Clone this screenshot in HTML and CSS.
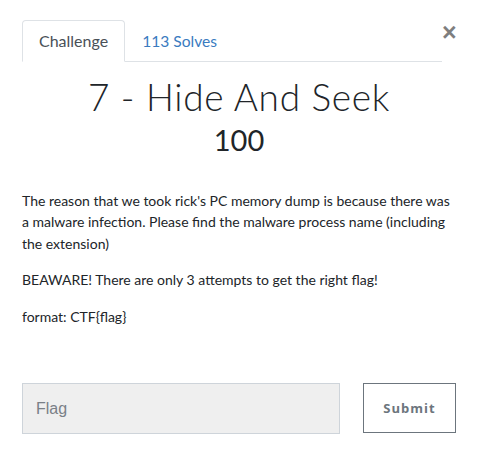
FILE: index.html
```html
<!DOCTYPE html>
<html>
<head>
<meta charset="utf-8">
<link rel="stylesheet" href="styles.css">
</head>
<body>
<div class="modal">
  <div class="header">
    <ul class="tabs">
      <li class="tab active">Challenge</li>
      <li class="tab link">113 Solves</li>
    </ul>
    <button class="close">×</button>
  </div>
  <div class="body">
    <h2 class="title">7 - Hide And Seek</h2>
    <h3 class="value">100</h3>
    <div class="desc">
      <p>The reason that we took rick's PC memory dump is because there was a malware infection. Please find the malware process name (including the extension)</p>
      <p>BEAWARE! There are only 3 attempts to get the right flag!</p>
      <p>format: CTF{flag}</p>
    </div>
    <form class="submit-row">
      <input class="flag" type="text" placeholder="Flag">
      <button class="submit" type="button">Submit</button>
    </form>
  </div>
</div>
</body>
</html>
```
FILE: styles.css
```css
html, body {
  margin: 0;
  padding: 0;
  background: #fff;
}
body {
  font-family: Lato, "Noto Sans", sans-serif;
  color: #212529;
}
.modal {
  width: 434px;
  margin-left: 22px;
  padding-top: 20px;
}
.header {
  display: flex;
  align-items: flex-start;
}
.tabs {
  flex: 1;
  display: flex;
  list-style: none;
  margin: 0;
  padding: 0;
  border-bottom: 1px solid #dee2e6;
}
.tab {
  height: 42px;
  box-sizing: border-box;
  padding: 0 16px;
  font-size: 16px;
  line-height: 40px;
  border: 1px solid transparent;
  border-radius: 4px 4px 0 0;
  margin-bottom: -1px;
}
.tab.active {
  color: #495057;
  border-color: #dee2e6 #dee2e6 #fff;
  background: #fff;
}
.tab.link {
  color: #3a7bbf;
  padding-left: 16px;
  font-size: 15.6px;
}
.close {
  width: 14px;
  padding: 0;
  border: 0;
  background: none;
  font-family: "Liberation Sans", Arial, sans-serif;
  font-size: 25px;
  font-weight: 700;
  line-height: 1;
  color: #000;
  opacity: 0.5;
  margin-top: 0;
}
.title {
  margin: 13px 0 0;
  text-align: center;
  font-family: Lato, sans-serif;
  font-weight: 300;
  font-size: 37px;
  letter-spacing: 0.7px;
  line-height: 44px;
}
.value {
  margin: 3px 0 0;
  text-align: center;
  font-weight: 400;
  font-size: 29px;
  line-height: 36px;
}
.desc {
  margin-top: 32px;
  font-size: 14px;
  line-height: 21.3px;
}
.desc p {
  margin: 0 0 15.5px;
}
.desc p:last-child {
  margin-bottom: 0;
}
.submit-row {
  display: flex;
  gap: 23px;
  margin: 56px 0 0;
}
.flag {
  width: 318px;
  height: 51px;
  box-sizing: border-box;
  background: #efefef;
  border: 1px solid #ced4da;
  padding: 0 13px;
  font-family: "Liberation Sans", Arial, sans-serif;
  font-size: 16px;
  outline: none;
}
.flag::placeholder {
  color: #7a8087;
}
.submit {
  width: 93px;
  height: 50px;
  box-sizing: border-box;
  background: #fff;
  border: 1px solid #6c757d;
  color: #6c757d;
  font-family: "Open Sans", sans-serif;
  font-weight: 700;
  font-size: 13px;
  letter-spacing: 1px;
}
```
